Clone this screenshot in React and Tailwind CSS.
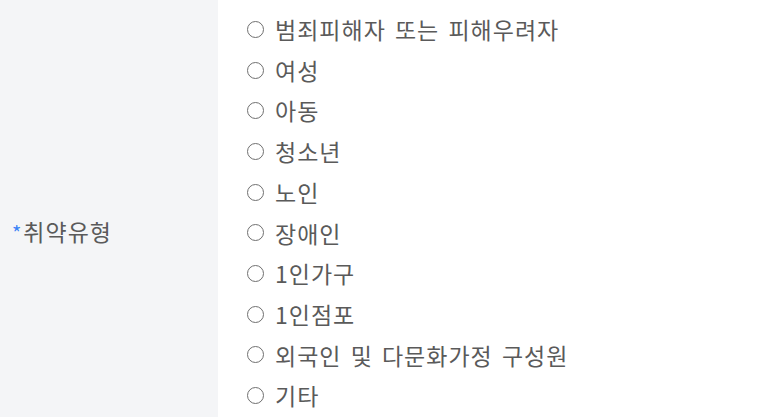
import React from 'react';

const options = [
  '범죄피해자 또는 피해우려자',
  '여성',
  '아동',
  '청소년',
  '노인',
  '장애인',
  '1인가구',
  '1인점포',
  '외국인 및 다문화가정 구성원',
  '기타',
];

export default function App() {
  return (
    <div
      className="w-[757px] h-[417px] overflow-hidden bg-white text-[#5a5a5a]"
      style={{ fontFamily: '"Noto Sans CJK KR", "Noto Sans", sans-serif' }}
    >
      <div className="flex h-[462px]">
        {/* label cell */}
        <div className="w-[218px] shrink-0 bg-[#f4f5f7] flex items-center pl-[12px]">
          <span className="text-[#3b82f6] text-[20px] mr-[2px] mt-[4px]">*</span>
          <span className="text-[23px] tracking-[1px]">취약유형</span>
        </div>

        {/* radio options */}
        <ul className="flex-1 pl-[29px] pt-[9px]">
          {options.map((o) => (
            <li key={o} className="flex items-center h-[40.7px] text-[23px] tracking-[1px] [word-spacing:3px]">
              <span className="w-[17px] h-[17px] rounded-full border-[1.5px] border-[#6f6f6f] mr-[11px] shrink-0" />
              <span>{o}</span>
            </li>
          ))}
        </ul>
      </div>
    </div>
  );
}
